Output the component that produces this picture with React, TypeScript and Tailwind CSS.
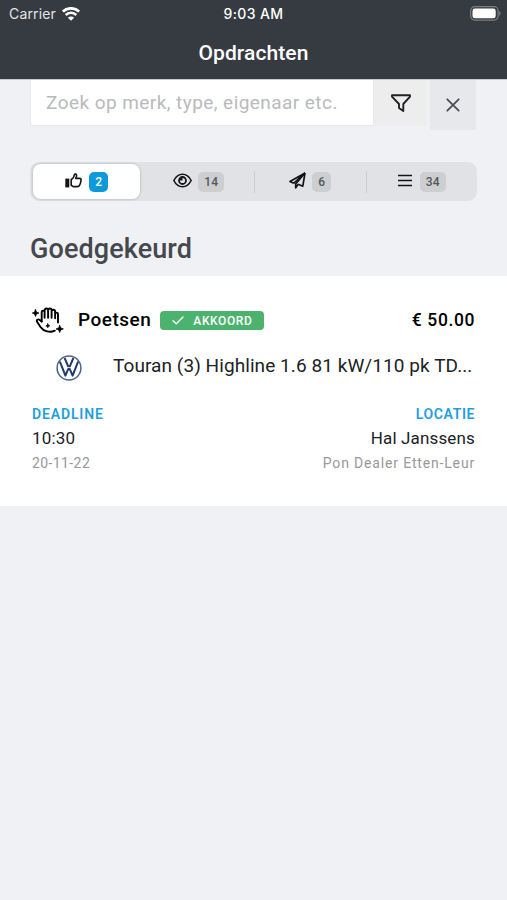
import React from 'react';
import clsx from 'clsx';

type IconProps = { className?: string };

const WifiIcon: React.FC<IconProps> = ({ className }) => (
  <svg viewBox="0 0 18 14" className={className} fill="none" stroke="currentColor">
    <path d="M.9 4.600a11.600 11.600 0 0 1 16.200 0" strokeWidth="2.700" />
    <path d="M3.700 8a7.500 7.500 0 0 1 10.600 0" strokeWidth="2.500" />
    <path d="M9 13.800 5.900 10.700a4.400 4.400 0 0 1 6.200 0Z" fill="currentColor" stroke="none" />
  </svg>
);

const BatteryIcon: React.FC<IconProps> = ({ className }) => (
  <svg viewBox="0 0 31 15" className={className}>
    <rect x="0.7" y="0.7" width="27.4" height="13.4" rx="4" fill="none" stroke="#7b7e82" strokeWidth="1.200" />
    <rect x="2.500" y="2.500" width="23.200" height="9.800" rx="2.400" fill="#fff" />
    <path d="M29.200 5v4.800c.8-.4 1.300-1.300 1.300-2.400S30 5.400 29.200 5Z" fill="#7b7e82" />
  </svg>
);

const FilterIcon: React.FC<IconProps> = ({ className }) => (
  <svg viewBox="0 0 20 18" className={className} fill="none" stroke="currentColor" strokeWidth="1.900" strokeLinejoin="round">
    <path d="M1 1.200h18v1.500L12.300 10v7L8 13.900V10L1 2.700Z" />
  </svg>
);

const CloseIcon: React.FC<IconProps> = ({ className }) => (
  <svg viewBox="0 0 14 14" className={className} fill="none" stroke="currentColor" strokeWidth="1.800" strokeLinecap="round">
    <path d="m1.300 1.300 11.400 11.400M12.700 1.300 1.300 12.700" />
  </svg>
);

const LikeIcon: React.FC<IconProps> = ({ className }) => (
  <svg viewBox="0 0 17 15" className={className}>
    <rect x="0.300" y="5.600" width="4" height="8.800" fill="currentColor" />
    <path
      d="M6.200 12.200V6.700l2-1.900c.8-.8.8-1.500 1-2.600.2-1.100.7-1.400 1.400-1.200 1 .3 1.100 1.600.8 2.600l-.6 1.800h3.800c1.300 0 1.700.9 1.400 1.700-.1 2.200-.8 4-1.500 5.300-.4.8-1 1.200-2 1.200H8.800c-1.200 0-1.700-1-2.600-1.400Z"
      fill="none"
      stroke="currentColor"
      strokeWidth="1.600"
      strokeLinejoin="round"
    />
  </svg>
);

const EyeIcon: React.FC<IconProps> = ({ className }) => (
  <svg viewBox="0 0 18 14" className={className} fill="none" stroke="currentColor">
    <path d="M.8 7C2.600 3.400 5.500 1.100 9 1.100S15.400 3.400 17.200 7C15.400 10.600 12.500 12.900 9 12.900S2.600 10.600.8 7Z" strokeWidth="1.500" />
    <circle cx="9" cy="7" r="3.300" strokeWidth="1.700" />
    <path d="M9 4.500V7H6.500A2.500 2.500 0 0 1 9 4.500Z" fill="currentColor" stroke="none" />
  </svg>
);

const PlaneIcon: React.FC<IconProps> = ({ className }) => (
  <svg viewBox="0 0 17 17" className={className} fill="none" stroke="currentColor" strokeWidth="1.700" strokeLinejoin="round">
    <path d="M16 1 1 9.500l3.700 1.800M16 1l-2.200 13.200-4.600-1.900M16 1 4.700 11.300" />
    <path d="M16 1 6.700 12v3.800l2.500-3.500" />
  </svg>
);

const ListIcon: React.FC<IconProps> = ({ className }) => (
  <svg viewBox="0 0 14 13" className={className} stroke="currentColor" strokeWidth="1.700">
    <path d="M0 1.500h14M0 6.500h14M0 11.500h14" />
  </svg>
);

const CleanHandIcon: React.FC<IconProps> = ({ className }) => (
  <svg viewBox="0 0 32 26" className={className} fill="none" stroke="currentColor" strokeLinecap="round" strokeLinejoin="round">
    {/* fingers */}
    <path d="M9.700 14.500V5c0-1.900 2.900-1.900 2.900 0M12.600 10.800V3.200c0-2.300 3.500-2.300 3.500 0v7.600M16.100 3.200c0-2.300 3.500-2.300 3.500 0v7.600M19.600 4.400c0-2.200 3.500-2.200 3.500 0v6.800M23.100 7c0-1.900 2.900-1.900 2.900 0v8.500" strokeWidth="1.900" />
    {/* thumb and palm */}
    <path d="M9.700 14.500 7.800 13c-2-1.500-3.700.1-2.600 1.900l3.300 5c3 4.500 9.500 6.200 14.300 3.800" strokeWidth="1.900" />
    <path d="M3.500 2.500 4.500 5l2.500 1-2.500 1-1 2.500-1-2.500L.3 6l2.200-1ZM27.700 18.300l1.100 2.600 2.600 1-2.600 1-1.100 2.600-1.100-2.600-2.600-1 2.600-1Z" fill="currentColor" strokeWidth="0.700" />
    <path d="m15.800 16.800.6 1.400 1.400.6-1.400.6-.6 1.400-.6-1.400-1.400-.6 1.400-.6Z" fill="currentColor" strokeWidth="0.700" />
  </svg>
);

const CheckIcon: React.FC<IconProps> = ({ className }) => (
  <svg viewBox="0 0 12 9" className={className} fill="none" stroke="currentColor" strokeWidth="1.300" strokeLinecap="round" strokeLinejoin="round">
    <path d="m1 4.700 3.300 3L11 1" />
  </svg>
);

const VolkswagenLogo: React.FC<IconProps> = ({ className }) => (
  <svg viewBox="0 0 26 26" className={className} fill="none">
    <circle cx="13" cy="13" r="11.900" stroke="#4e6389" strokeWidth="1.500" />
    <path d="M8.600 3 12.200 11.300h1.600L17.400 3" stroke="#213a6b" strokeWidth="2" strokeLinejoin="round" />
    <path d="M3.900 6.600 9.400 20.600 12.300 13.900h1.400l2.900 6.700L22.100 6.600" stroke="#213a6b" strokeWidth="2" strokeLinejoin="round" />
  </svg>
);

const tabs = [
  { icon: <LikeIcon className="h-[15px] w-[17px]" />, count: 2, active: true, className: 'w-[107px] pl-px gap-[7px]' },
  { icon: <EyeIcon className="h-[15px] w-[19px]" />, count: 14, className: 'w-[115px] pl-[4px] gap-[6px]' },
  { icon: <PlaneIcon className="h-[17px] w-[17px]" />, count: 6, className: 'w-[111px] gap-[6px]' },
  { icon: <ListIcon className="h-[13px] w-[14px]" />, count: 34, className: 'w-[111px] gap-[8px]' },
];

const App: React.FC = () => {
  return (
    <div className="h-[900px] w-[507px] overflow-hidden bg-[#eff1f5] font-[Roboto,sans-serif] text-[#202225]">
      {/* Status bar and title */}
      <header className="h-[79px] bg-[#363a41] text-white">
        <div className="grid h-[27px] grid-cols-3 items-center pl-[9px] pr-[6px] font-[Inter,sans-serif] text-[14px]">
          <div className="flex items-center gap-[6px] tracking-[0.150px] text-[#e3e4e6]">
            <span>Carrier</span>
            <WifiIcon className="h-[14px] w-[18px] text-white" />
          </div>
          <div className="-ml-[3px] text-center font-medium tracking-[0.350px]">9:03 AM</div>
          <BatteryIcon className="h-[15px] w-[31px] justify-self-end" />
        </div>
        <h1 className="pt-[11px] text-center text-[21px] leading-[30px] font-medium tracking-[0.100px]">Opdrachten</h1>
      </header>

      {/* Search */}
      <div className="flex border-t border-[#c9cbce] pl-[30px]">
        <input
          type="text"
          placeholder="Zoek op merk, type, eigenaar etc."
          className="h-[46px] w-[344px] rounded-bl-[4px] border border-t-0 border-[#e7e8ea] bg-white pl-[15px] text-[19px] tracking-[0.440px] outline-none placeholder:text-[#b9babb]"
        />
        <button className="flex h-[46px] w-[53px] items-center justify-center bg-[#ededee] text-[#202225]">
          <FilterIcon className="h-[18px] w-[20px]" />
        </button>
        <button className="ml-[3px] flex h-[50px] w-[46px] items-center justify-center bg-[#e6e8ec] text-[#4b4e52]">
          <CloseIcon className="h-[14px] w-[14px]" />
        </button>
      </div>

      {/* Status tabs */}
      <div className="mt-[32px] ml-[30px] flex h-[39px] w-[447px] items-center rounded-[9px] bg-[#e1e2e5] pl-[3px] text-[#131416]">
        {tabs.map((tab, i) => (
          <React.Fragment key={tab.count}>
            {i > 1 && <div className="h-[22px] w-px bg-[#cbccd0]" />}
            <div
              className={clsx(
                'flex h-[35px] items-center justify-center',
                tab.className,
                tab.active && 'rounded-[8px] bg-white shadow-[0_0_2px_1px_rgba(0,0,0,0.12)]'
              )}
            >
              <span className="-mt-[3px]">{tab.icon}</span>
              <span
                className={clsx(
                  'mt-px flex h-[20px] items-center rounded-[5px] px-[6px] text-[12px] font-medium tracking-[0.300px]',
                  tab.active ? 'bg-[#0c9adb] text-white' : 'bg-[#cdcecf] text-[#55575a]'
                )}
              >
                {tab.count}
              </span>
            </div>
          </React.Fragment>
        ))}
      </div>

      <h2 className="mt-[29px] ml-[30px] h-[46px] text-[27px] leading-[38px] font-medium tracking-[0.100px] text-[#45484c]">
        Goedgekeurd
      </h2>

      {/* Order */}
      <div className="h-[230px] bg-white pt-[31px] pr-[32px] pl-[32px]">
        <div className="flex h-[26px] items-center">
          <CleanHandIcon className="h-[26px] w-[32px] text-black" />
          <span className="ml-[14px] text-[19px] leading-[26px] font-medium tracking-[0.500px] text-black">Poetsen</span>
          <span className="ml-[9px] flex h-[19px] w-[104px] items-center rounded-[4px] bg-[#4bb36d] pl-[12px] text-white">
            <CheckIcon className="h-[9px] w-[12px]" />
            <span className="ml-[9px] pt-px text-[12px] font-medium tracking-[0.600px]">AKKOORD</span>
          </span>
          <span className="ml-auto text-[17.500px] font-medium tracking-[0.600px] text-black">€ 50.00</span>
        </div>

        <div className="mt-[18px] flex h-[30px] items-center">
          <VolkswagenLogo className="mt-[4px] ml-[24px] h-[26px] w-[26px] shrink-0" />
          <span className="ml-[31px] text-[19px] tracking-[0.070px] whitespace-nowrap">
            Touran (3) Highline 1.6 81 kW/110 pk TD...
          </span>
        </div>

        <div className="mt-[22px] flex justify-between">
          <div className="flex flex-col">
            <span className="text-[14px] leading-[23px] font-semibold tracking-[0.850px] text-[#1da0dc]">DEADLINE</span>
            <span className="text-[17px] leading-[25px] tracking-[0.200px]">10:30</span>
            <span className="text-[14px] leading-[24px] tracking-[0.400px] text-[#97999b]">20-11-22</span>
          </div>
          <div className="flex flex-col text-right">
            <span className="text-[14px] leading-[23px] font-semibold tracking-[0.600px] text-[#1da0dc]">LOCATIE</span>
            <span className="text-[17px] leading-[25px] tracking-[0.150px]">Hal Janssens</span>
            <span className="text-[14px] leading-[24px] tracking-[0.830px] text-[#97999b]">Pon Dealer Etten-Leur</span>
          </div>
        </div>
      </div>
    </div>
  );
};

export default App;
